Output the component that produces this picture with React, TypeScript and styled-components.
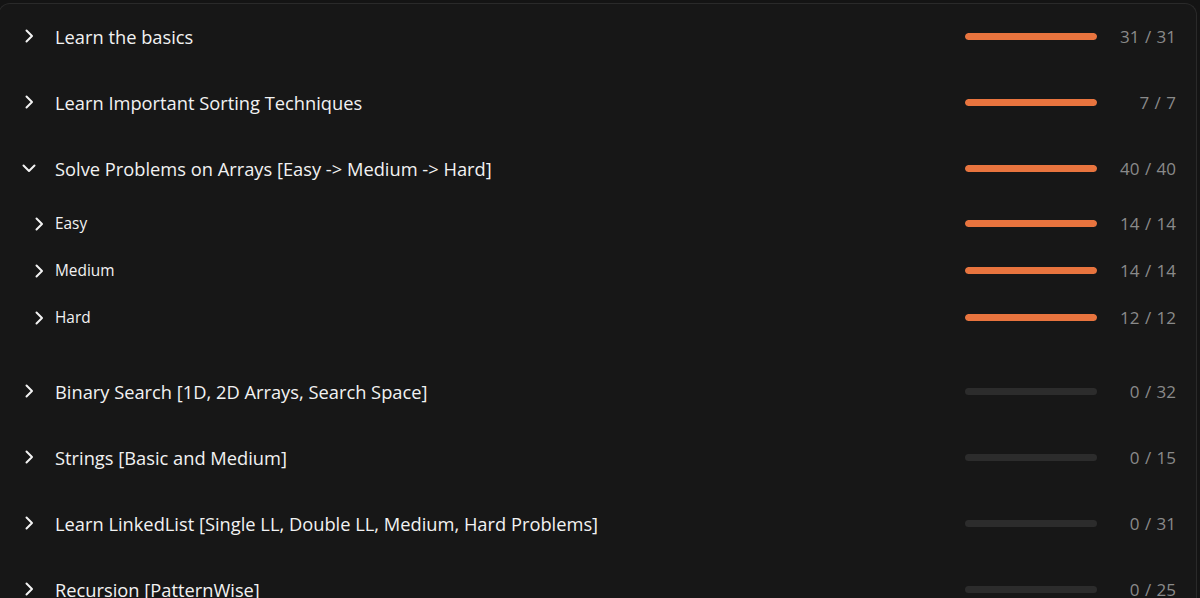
import { createGlobalStyle, styled } from 'styled-components'

type Topic = {
    title: string
    done: number
    total: number
    open?: boolean
    children?: Topic[]
}

const topics: Topic[] = [
    { title: 'Learn the basics', done: 31, total: 31 },
    { title: 'Learn Important Sorting Techniques', done: 7, total: 7 },
    {
        title: 'Solve Problems on Arrays [Easy -> Medium -> Hard]',
        done: 40,
        total: 40,
        open: true,
        children: [
            { title: 'Easy', done: 14, total: 14 },
            { title: 'Medium', done: 14, total: 14 },
            { title: 'Hard', done: 12, total: 12 },
        ],
    },
    { title: 'Binary Search [1D, 2D Arrays, Search Space]', done: 0, total: 32 },
    { title: 'Strings [Basic and Medium]', done: 0, total: 15 },
    { title: 'Learn LinkedList [Single LL, Double LL, Medium, Hard Problems]', done: 0, total: 31 },
    { title: 'Recursion [PatternWise]', done: 0, total: 25 },
]

const Chevron = ({ open }: { open?: boolean }) => (
    <svg width="16" height="16" viewBox="0 0 16 16" fill="none">
        <path
            d={open ? 'M2.5 5.5 L8 11 L13.5 5.5' : 'M5.5 2.5 L11 8 L5.5 13.5'}
            stroke="#f2f2f2"
            strokeWidth="2"
            strokeLinecap="round"
            strokeLinejoin="round"
        />
    </svg>
)

const TopicRow = ({ topic, sub }: { topic: Topic; sub?: boolean }) => (
    <Row $sub={sub}>
        <Toggle $sub={sub}>
            <Chevron open={topic.open} />
        </Toggle>
        <Title $sub={sub}>{topic.title}</Title>
        <Track>
            <Fill style={{ width: `${(topic.done / topic.total) * 100}%` }} />
        </Track>
        <Count>
            {topic.done} / {topic.total}
        </Count>
    </Row>
)

export default function App() {
    return (
        <>
            <GlobalStyle />
            <Panel>
                {topics.map((topic) => (
                    <div key={topic.title}>
                        <TopicRow topic={topic} />
                        {topic.open && topic.children && (
                            <SubList>
                                {topic.children.map((child) => (
                                    <TopicRow key={child.title} topic={child} sub />
                                ))}
                            </SubList>
                        )}
                    </div>
                ))}
            </Panel>
        </>
    )
}

const GlobalStyle = createGlobalStyle`
    html, body {
        margin: 0;
        background: #141414;
        overflow: hidden;
    }
    body {
        font-family: 'Open Sans', 'Noto Sans', sans-serif;
        color: #f2f2f2;
    }
`

const Panel = styled.div`
    margin: 3px 3px 0 -2px;
    background: #171717;
    border: 1px solid #2a2a2a;
    border-bottom: none;
    border-radius: 12px 12px 0 0;
    padding: 0 20px 0 21px;
`

const Row = styled.div<{ $sub?: boolean }>`
    display: flex;
    align-items: center;
    height: ${(p) => (p.$sub ? '47px' : '66px')};
    margin-top: -1px;
    margin-bottom: 1px;
`

const Toggle = styled.span<{ $sub?: boolean }>`
    display: flex;
    align-items: center;
    justify-content: center;
    width: 18px;
    margin-left: ${(p) => (p.$sub ? '10px' : '0')};
    margin-right: ${(p) => (p.$sub ? '7px' : '17px')};
`

const Title = styled.span<{ $sub?: boolean }>`
    flex: 1;
    font-size: ${(p) => (p.$sub ? '15.4px' : '18.3px')};
    font-weight: 500;
    color: #f2f2f2;
    white-space: nowrap;
`

const Track = styled.div`
    width: 132px;
    height: 7px;
    border-radius: 4px;
    background: #2c2c2c;
    overflow: hidden;
`

const Fill = styled.div`
    height: 100%;
    border-radius: 4px;
    background: #e8743e;
`

const Count = styled.span`
    width: 79px;
    text-align: right;
    font-size: 17px;
    color: #8a8a8a;
    word-spacing: 1px;
`

const SubList = styled.div`
    margin-top: -2px;
    padding-bottom: 17px;
`
